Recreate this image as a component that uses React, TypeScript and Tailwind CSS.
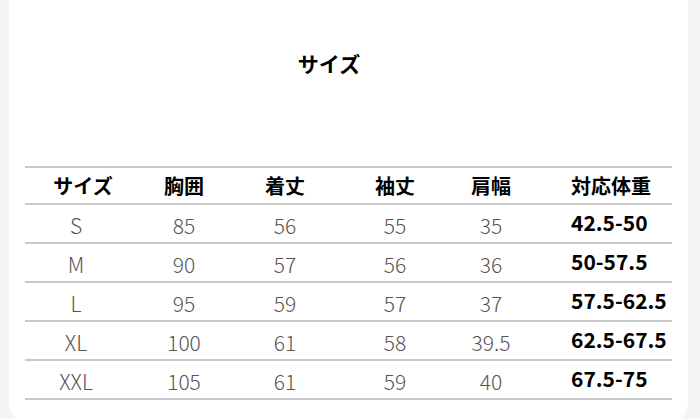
const rows = [
  ["S", "85", "56", "55", "35", "42.5-50"],
  ["M", "90", "57", "56", "36", "50-57.5"],
  ["L", "95", "59", "57", "37", "57.5-62.5"],
  ["XL", "100", "61", "58", "39.5", "62.5-67.5"],
  ["XXL", "105", "61", "59", "40", "67.5-75"],
];

const headers = ["サイズ", "胸囲", "着丈", "袖丈", "肩幅", "対応体重"];

const cols = "grid grid-cols-[110px_98px_104px_116px_76px_1fr]";

export default function App() {
  return (
    <div
      className="h-[419px] w-[700px] overflow-hidden bg-[#f5f5f5] pl-[9px] pr-[12px]"
      style={{ fontFamily: '"Noto Sans CJK JP", "Noto Sans", sans-serif' }}
    >
      <div className="h-[430px] rounded-b-[30px] bg-white px-4 pt-[49px]">
        <h1 className="pr-[39px] text-center text-[21px] font-bold leading-[28px] text-black">
          サイズ
        </h1>

        <div className="mt-[89px]">
          <div className={`${cols} h-[39px] items-center border-y-2 border-[#c9c9c9] text-[20px] font-bold text-black`}>
            {headers.map((h, i) => (
              <div key={h} className={i === 5 ? "pl-[42px]" : i === 0 ? "pl-[6px] text-center" : "text-center"}>
                {h}
              </div>
            ))}
          </div>
          {rows.map((r) => (
            <div key={r[0]} className={`${cols} h-[39px] items-center border-b-2 border-[#c9c9c9]`}>
              {r.slice(0, 5).map((v, i) => (
                <div
                  key={i}
                  className={`pt-[4px] text-center text-[21px] font-light leading-none text-[#555] ${i === 0 ? "pr-[8px]" : ""}`}
                >
                  {v}
                </div>
              ))}
              <div className="pb-[2px] pl-[42px] text-[21px] font-bold leading-none text-black">{r[5]}</div>
            </div>
          ))}
        </div>
      </div>
    </div>
  );
}
